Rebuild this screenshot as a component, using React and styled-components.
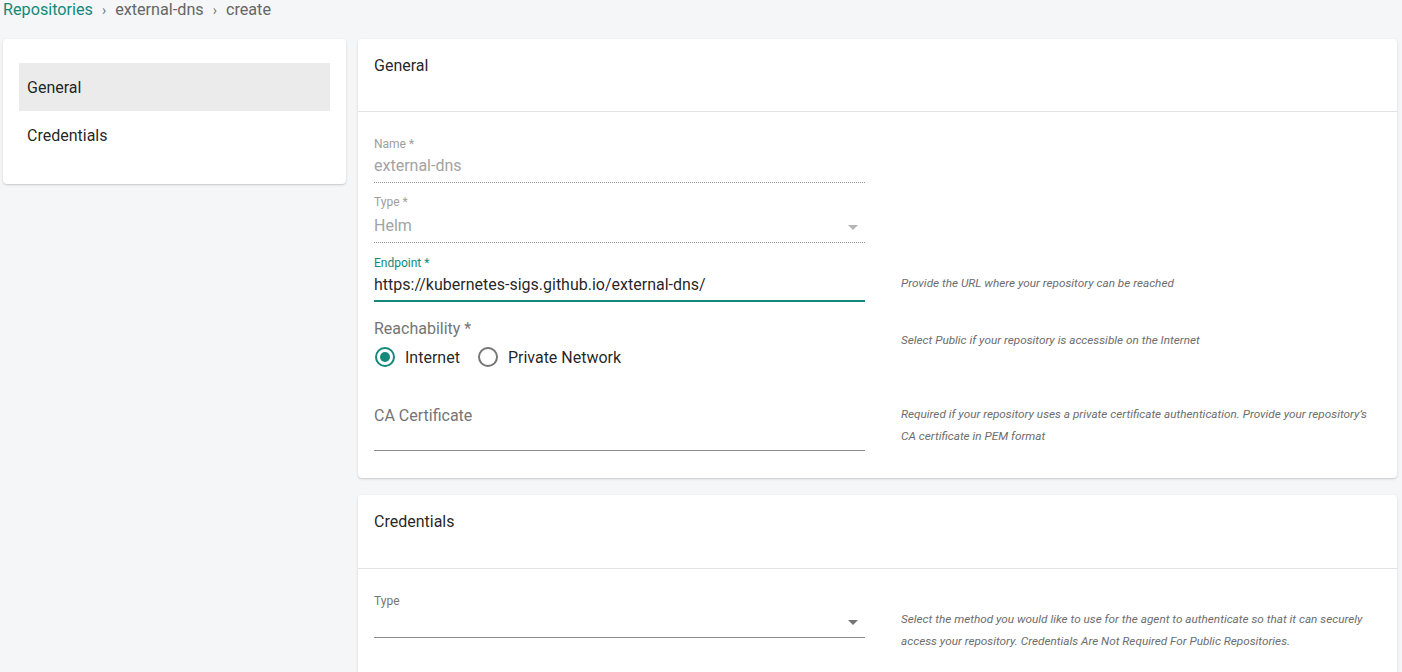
import React from "react";
import styled, { createGlobalStyle } from "styled-components";

const GlobalStyle = createGlobalStyle`
  html, body {
    margin: 0;
    padding: 0;
    background: #f5f6f8;
    font-family: Roboto, "Liberation Sans", Arial, sans-serif;
    color: rgba(0, 0, 0, 0.87);
  }
  * { box-sizing: border-box; }
`;

const Page = styled.div`
  padding: 0 5px 0 3px;
  width: 1402px;
  height: 672px;
  overflow: hidden;
`;

const Breadcrumbs = styled.nav`
  display: flex;
  align-items: center;
  gap: 9px;
  font-size: 16.2px;
  line-height: 20px;
  color: #666;
  margin-bottom: 19px;
`;

const Crumb = styled.span`
  color: ${(p) => (p.$link ? "#12897b" : "#666")};
`;

const Sep = styled.span`
  color: #777;
  font-size: 14px;
`;

const Layout = styled.div`
  display: grid;
  grid-template-columns: 343px 1fr;
  gap: 12px;
  align-items: start;
`;

const Card = styled.div`
  background: #fff;
  border-radius: 4px;
  box-shadow: 0 1px 3px rgba(0, 0, 0, 0.12), 0 1px 1px rgba(0, 0, 0, 0.08);
`;

const SideCard = styled(Card)`
  padding: 24px 16px 25px;
`;

const MenuItem = styled.div`
  height: 48px;
  display: flex;
  align-items: center;
  padding-left: 8px;
  font-size: 16px;
  background: ${(p) => (p.$active ? "#ebebeb" : "transparent")};
`;

const Stack = styled.div`
  display: flex;
  flex-direction: column;
  gap: 17px;
`;

const CardHeader = styled.div`
  height: ${(p) => p.$h || 73}px;
  padding: 15px 16px 0;
  font-size: 16px;
  line-height: 24px;
  border-bottom: 1px solid #e3e3e3;
`;

const CardBody = styled.div`
  padding: ${(p) => p.$pad || "25px 16px 27px"};
`;

const Row = styled.div`
  display: grid;
  grid-template-columns: 491px 1fr;
  column-gap: 36px;
  margin-bottom: ${(p) => p.$mb || 0}px;
`;

const Help = styled.div`
  padding-top: ${(p) => p.$pt || 0}px;
  padding-right: 6px;
  font-size: 11.75px;
  font-style: italic;
  line-height: 22px;
  color: #6d6d6d;
`;

const Label = styled.div`
  font-size: 12px;
  line-height: 14px;
  color: ${(p) => (p.$focus ? "#12897b" : p.$muted ? "#9e9e9e" : "#757575")};
`;

const InputLine = styled.div`
  position: relative;
  margin-top: ${(p) => p.$mt ?? 3}px;
  padding-bottom: ${(p) => (p.$focus ? 2 : 4)}px;
  font-size: 16px;
  line-height: 24px;
  min-height: ${(p) => p.$minH || 29}px;
  color: ${(p) => (p.$disabled ? "#a3a3a3" : "rgba(0,0,0,0.87)")};
  border-bottom: ${(p) =>
    p.$focus
      ? "2px solid #12897b"
      : p.$disabled
      ? "1px dotted rgba(0,0,0,0.42)"
      : "1px solid #8c8c8c"};
`;

const Arrow = styled.span`
  position: absolute;
  right: 7px;
  top: ${(p) => p.$top || 11}px;
  width: 0;
  height: 0;
  border-left: 5px solid transparent;
  border-right: 5px solid transparent;
  border-top: 5px solid ${(p) => (p.$disabled ? "#b5b5b5" : "#757575")};
`;

const BigLabel = styled.div`
  font-size: 16px;
  line-height: 20px;
  color: #757575;
`;

const Radios = styled.div`
  display: flex;
  align-items: center;
  gap: 17px;
  margin-top: 6px;
  height: 24px;
`;

const RadioOption = styled.label`
  display: flex;
  align-items: center;
  gap: 10px;
  font-size: 16px;
  color: rgba(0, 0, 0, 0.87);
`;

const RadioCircle = styled.span`
  width: 20px;
  height: 20px;
  border-radius: 50%;
  border: 2px solid ${(p) => (p.$checked ? "#12897b" : "#757575")};
  display: flex;
  align-items: center;
  justify-content: center;
  margin-left: 1px;

  &::after {
    content: "";
    width: 10px;
    height: 10px;
    border-radius: 50%;
    background: ${(p) => (p.$checked ? "#12897b" : "transparent")};
  }
`;

const CertField = styled.div`
  height: 48px;
  padding-top: 3px;
  border-bottom: 1px solid #8c8c8c;
`;

const Radio = ({ checked, children }) => (
  <RadioOption>
    <RadioCircle $checked={checked} />
    {children}
  </RadioOption>
);

export default function App() {
  return (
    <>
      <GlobalStyle />
      <Page>
        <Breadcrumbs>
          <Crumb $link>Repositories</Crumb>
          <Sep>›</Sep>
          <Crumb>external-dns</Crumb>
          <Sep>›</Sep>
          <Crumb>create</Crumb>
        </Breadcrumbs>
        <Layout>
          <SideCard>
            <MenuItem $active>General</MenuItem>
            <MenuItem>Credentials</MenuItem>
          </SideCard>
          <Stack>
            <Card>
              <CardHeader>General</CardHeader>
              <CardBody>
                <Row $mb={12}>
                  <div>
                    <Label $muted>Name *</Label>
                    <InputLine $disabled>external-dns</InputLine>
                  </div>
                  <div />
                </Row>
                <Row $mb={13}>
                  <div>
                    <Label $muted>Type *</Label>
                    <InputLine $disabled $mt={5}>
                      Helm
                      <Arrow $disabled />
                    </InputLine>
                  </div>
                  <div />
                </Row>
                <Row $mb={17}>
                  <div>
                    <Label $focus>Endpoint *</Label>
                    <InputLine $focus>https://kubernetes-sigs.github.io/external-dns/</InputLine>
                  </div>
                  <Help $pt={16}>Provide the URL where your repository can be reached</Help>
                </Row>
                <Row $mb={34}>
                  <div>
                    <BigLabel>Reachability *</BigLabel>
                    <Radios>
                      <Radio checked>Internet</Radio>
                      <Radio>Private Network</Radio>
                    </Radios>
                  </div>
                  <Help $pt={10}>Select Public if your repository is accessible on the Internet</Help>
                </Row>
                <Row>
                  <CertField>
                    <BigLabel>CA Certificate</BigLabel>
                  </CertField>
                  <Help>
                    Required if your repository uses a private certificate authentication. Provide your
                    repository’s CA certificate in PEM format
                  </Help>
                </Row>
              </CardBody>
            </Card>
            <Card>
              <CardHeader $h={74}>Credentials</CardHeader>
              <CardBody $pad="25px 16px 29px">
                <Row>
                  <div>
                    <Label>Type</Label>
                    <InputLine $minH={27}>
                      <Arrow $top={9} />
                    </InputLine>
                  </div>
                  <Help $pt={14}>
                    Select the method you would like to use for the agent to authenticate so that it can
                    securely access your repository. Credentials Are Not Required For Public Repositories.
                  </Help>
                </Row>
              </CardBody>
            </Card>
          </Stack>
        </Layout>
      </Page>
    </>
  );
}
